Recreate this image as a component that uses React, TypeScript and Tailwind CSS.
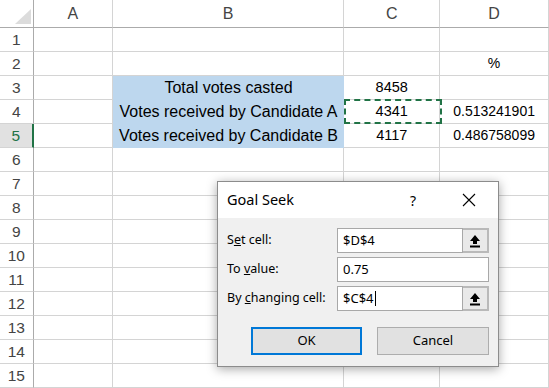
import React from "react";

const GRID = "border-[#d4d4d4]";
const SHEET_FONT = { fontFamily: '"Liberation Sans", Arial, sans-serif' };
const UI_FONT = { fontFamily: '"Noto Sans", "Liberation Sans", sans-serif' };

type Row = { b?: string; c?: string; d?: string; blue?: boolean };

const rows: Row[] = [
  {},
  { d: "%" },
  { b: "Total votes casted", c: "8458", blue: true },
  { b: "Votes received by Candidate A", c: "4341", d: "0.513241901", blue: true },
  { b: "Votes received by Candidate B", c: "4117", d: "0.486758099", blue: true },
  {}, {}, {}, {}, {}, {}, {}, {}, {}, {},
];

const PickIcon = () => (
  <svg width="12" height="14" viewBox="0 0 12 14">
    <path d="M6 1 L11 7 H8 V10 H4 V7 H1 Z" fill="#000" />
    <rect x="1" y="11.5" width="10" height="2" fill="#000" />
  </svg>
);

const Field = ({ value, picker, cursor }: { value: string; picker?: boolean; cursor?: boolean }) => (
  <div className="flex h-[25px]">
    <div className={`flex items-center border border-[#a8a8a8] bg-white pl-[5px] text-[13px] text-black ${picker ? "w-[126px]" : "w-[152px]"}`}>
      {value}
      {cursor && <span className="ml-px inline-block h-[15px] w-px bg-black" />}
    </div>
    {picker && (
      <div className="flex w-[26px] items-center justify-center border-2 border-l-0 border-[#b9b9b9] bg-[#e9e9e9]">
        <PickIcon />
      </div>
    )}
  </div>
);

const GoalSeek = () => (
  <div
    className="absolute left-[217px] top-[181px] w-[282px] h-[186px] border border-[#8c8c8c] bg-[#f0f0f0] shadow-[0_2px_10px_rgba(0,0,0,0.35)]"
    style={UI_FONT}
  >
    <div className="flex h-[36px] items-center bg-white pl-[9px] text-[14.5px] text-black">
      <span className="flex-1">Goal Seek</span>
      <span className="w-[20px] text-center text-[14px]">?</span>
      <span className="ml-[38px] mr-[21px] flex w-[16px] items-center justify-center">
        <svg width="14" height="14" viewBox="0 0 14 14">
          <path d="M1 1 L13 13 M13 1 L1 13" stroke="#000" strokeWidth="1.1" />
        </svg>
      </span>
    </div>
    <div className="flex flex-col gap-[4px] pl-[9px] pt-[10px] text-[12.5px] text-black">
      <div className="flex items-center">
        <span className="w-[110px]">S<u>e</u>t cell:</span>
        <Field value="$D$4" picker />
      </div>
      <div className="flex items-center">
        <span className="w-[110px]">To <u>v</u>alue:</span>
        <Field value="0.75" />
      </div>
      <div className="flex items-center">
        <span className="w-[110px]">By <u>c</u>hanging cell:</span>
        <Field value="$C$4" picker cursor />
      </div>
      <div className="mt-[12px] flex gap-[15px] pl-[24px]">
        <button className="h-[28px] w-[111px] border-2 border-[#0078d7] bg-[#e1e1e1] text-[13px]">OK</button>
        <button className="h-[28px] w-[112px] border border-[#adadad] bg-[#e1e1e1] text-[13px]">Cancel</button>
      </div>
    </div>
  </div>
);

export default function App() {
  return (
    <div className="relative h-[388px] w-[549px] overflow-hidden bg-white text-[14px] text-black" style={SHEET_FONT}>
      <div className="flex h-[28px] text-[#444] text-[16px]">
        <div className="relative w-[34px] border-r border-b border-[#ababab]">
          <div className="absolute left-[15px] top-[9px] h-0 w-0 border-l-[16px] border-l-transparent" style={{ borderBottom: "15px solid #dcdcdc" }} />
        </div>
        {[["A", "w-[80px]"], ["B", "w-[234px]"], ["C", "w-[97px]"], ["D", "w-[110px]"]].map(([l, w]) => (
          <div key={l} className={`${w} flex items-center justify-center border-r border-b ${GRID} border-b-[#ababab]`}>
            {l}
          </div>
        ))}
      </div>
      {rows.map((r, i) => {
        const sel = i === 4;
        return (
          <div key={i} className="flex h-[24px]">
            <div
              className={`flex w-[34px] items-center justify-center border-b text-[15.5px] ${
                sel ? "border-r-2 border-r-[#217346] bg-[#e1e1e1] text-[#217346]" : "border-r border-r-[#ababab] text-[#444]"
              } ${GRID}`}
            >
              {i + 1}
            </div>
            <div className={`w-[80px] border-r border-b ${GRID}`} />
            <div
              className={`flex w-[234px] items-center justify-center text-[16px] ${
                r.blue ? "bg-[#bdd7ee]" : `border-r border-b ${GRID}`
              }`}
            >
              {r.b}
            </div>
            <div className={`relative flex w-[97px] items-center justify-center border-r border-b text-[14.5px] ${GRID}`}>
              {i === 3 && (
                <div className="absolute left-0 top-[-1px] h-[25px] w-[98px] border-2 border-dashed border-[#217346]" />
              )}
              {r.c}
            </div>
            <div className={`flex w-[110px] items-center justify-center border-r border-b text-[14px] ${GRID}`}>{r.d}</div>
          </div>
        );
      })}
      <GoalSeek />
    </div>
  );
}
